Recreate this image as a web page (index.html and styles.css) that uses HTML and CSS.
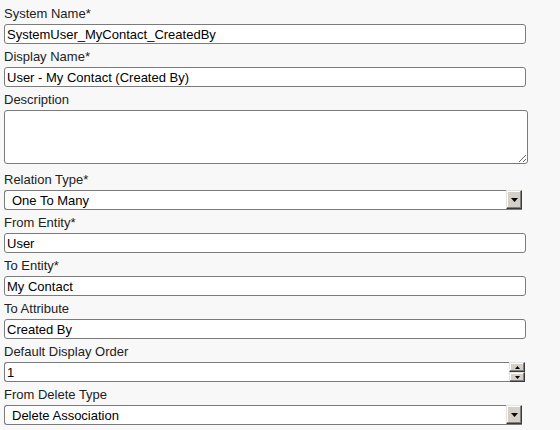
FILE: index.html
```html
<!DOCTYPE html>
<html lang="en">
<head>
  <meta charset="UTF-8" />
  <title>Relationship Properties</title>
  <link rel="stylesheet" href="styles.css">
</head>
<body>

<form class="rel-form">
  <div class="field">
    <label for="system-name">System Name*</label>
    <input type="text" id="system-name" class="text-input" value="SystemUser_MyContact_CreatedBy" />
  </div>

  <div class="field">
    <label for="display-name">Display Name*</label>
    <input type="text" id="display-name" class="text-input" value="User - My Contact (Created By)" />
  </div>

  <div class="field">
    <label for="description">Description</label>
    <textarea id="description" class="text-area"></textarea>
  </div>

  <div class="field">
    <label for="relation-type">Relation Type*</label>
    <div class="select-box">
      <select id="relation-type">
        <option>One To Many</option>
        <option>Many To One</option>
        <option>Many To Many</option>
      </select>
      <span class="drop-btn">
        <svg width="7" height="4" viewBox="0 0 7 4"><polygon points="0,0 7,0 3.5,4" fill="#000"/></svg>
      </span>
    </div>
  </div>

  <div class="field">
    <label for="from-entity">From Entity*</label>
    <input type="text" id="from-entity" class="text-input" value="User" />
  </div>

  <div class="field">
    <label for="to-entity">To Entity*</label>
    <input type="text" id="to-entity" class="text-input" value="My Contact" />
  </div>

  <div class="field">
    <label for="to-attribute">To Attribute</label>
    <input type="text" id="to-attribute" class="text-input" value="Created By" />
  </div>

  <div class="field">
    <label for="display-order">Default Display Order</label>
    <div class="number-box">
      <input type="text" id="display-order" value="1" />
      <span class="spinner">
        <span class="spin-btn">
          <svg width="5" height="3" viewBox="0 0 5 3"><polygon points="2.5,0 5,3 0,3" fill="#000"/></svg>
        </span>
        <span class="spin-btn">
          <svg width="5" height="3" viewBox="0 0 5 3"><polygon points="0,0 5,0 2.5,3" fill="#000"/></svg>
        </span>
      </span>
    </div>
  </div>

  <div class="field">
    <label for="delete-type">From Delete Type</label>
    <div class="select-box">
      <select id="delete-type">
        <option>Delete Association</option>
        <option>Cascade</option>
        <option>Restrict</option>
      </select>
      <span class="drop-btn">
        <svg width="7" height="4" viewBox="0 0 7 4"><polygon points="0,0 7,0 3.5,4" fill="#000"/></svg>
      </span>
    </div>
  </div>
</form>

</body>
</html>
```

FILE: styles.css
```css
body {
  margin: 0;
  padding: 1px 0 0 4px;
  background: #f8f8f8;
  font-family: "Liberation Sans", Arial, sans-serif;
  font-size: 13px;
  color: #222;
}

.field {
  margin-top: 4px;
}

.field label {
  display: block;
  line-height: 18px;
  margin-bottom: 1px;
}

.text-input {
  display: block;
  box-sizing: border-box;
  width: 522px;
  height: 20px;
  margin: 0;
  padding: 0 2px;
  border: 1px solid #7b7b7b;
  border-radius: 3px;
  background: #fff;
  font: inherit;
  color: #000;
  outline: none;
}

.text-area {
  display: block;
  box-sizing: border-box;
  width: 524px;
  height: 54px;
  margin: 0 0 7px;
  padding: 2px;
  border: 1px solid #7b7b7b;
  border-radius: 3px;
  background: #fff;
  font: inherit;
  resize: both;
  outline: none;
}

.select-box {
  display: flex;
  box-sizing: border-box;
  width: 518px;
  height: 20px;
  border: 1px solid #7b7b7b;
  border-right: none;
  border-radius: 3px 0 0 3px;
  background: #fff;
}

.select-box select {
  flex: 1;
  appearance: none;
  -webkit-appearance: none;
  border: none;
  background: transparent;
  padding: 0 0 0 7px;
  margin: 0;
  font: inherit;
  color: #000;
  outline: none;
}

.drop-btn {
  display: flex;
  align-items: center;
  justify-content: center;
  box-sizing: border-box;
  width: 16px;
  height: 19px;
  margin-top: -1px;
  background: #d4d0c8;
  border: 1px solid;
  border-color: #e4e2dc #3a3a3a #3a3a3a #e4e2dc;
  box-shadow: inset -1px -1px #808080, inset 1px 1px #fff;
}

.number-box {
  display: flex;
  box-sizing: border-box;
  width: 521px;
  height: 20px;
  border: 1px solid #7b7b7b;
  border-right: none;
  border-radius: 3px 0 0 3px;
  background: #fff;
}

.number-box input {
  flex: 1;
  border: none;
  background: transparent;
  padding: 0 2px;
  margin: 0;
  font: inherit;
  color: #000;
  outline: none;
}

.spinner {
  display: flex;
  flex-direction: column;
  width: 16px;
  margin-top: -1px;
  margin-bottom: -1px;
}

.spin-btn {
  flex: 1;
  display: flex;
  align-items: center;
  justify-content: center;
  box-sizing: border-box;
  background: #d4d0c8;
  border: 1px solid;
  border-color: #e4e2dc #3a3a3a #3a3a3a #e4e2dc;
  box-shadow: inset -1px -1px #808080, inset 1px 1px #fff;
}
```
